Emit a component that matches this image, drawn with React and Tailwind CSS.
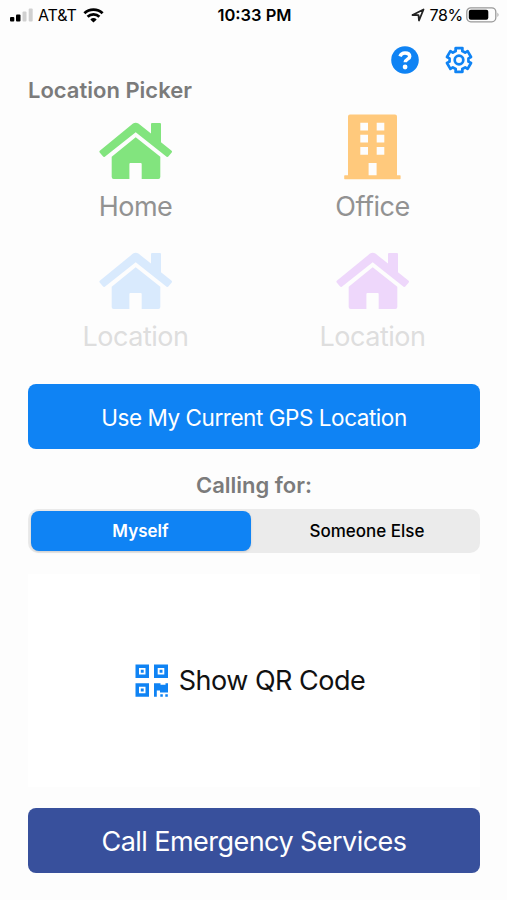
import { useState } from 'react';

function HouseIcon({ className }) {
  return (
    <svg viewBox="0 0 74 58" className={className} fill="currentColor">
      <path d="M34 1.6Q36.7-.2 39.4 1.6L52 11.4V2Q52 1 53 1H61Q62 1 62 2V20.3L72.6 28.8Q73.4 29.5 72.7 30.4L69.3 34.6Q68.5 35.4 67.6 34.7L36.7 10.3 5.8 34.7Q4.9 35.4 4.1 34.6L.7 30.4Q0 29.5.8 28.8Z" />
      <path d="M36.7 15.2 61.3 34.8V55Q61.3 57 59.3 57H42.7V42Q42.7 41 41.7 41H31.4Q30.4 41 30.4 42V57H14.7Q12.7 57 12.7 55V34.8Z" />
    </svg>
  );
}

function OfficeIcon({ className }) {
  return (
    <svg viewBox="0 0 57 66" className={className} fill="currentColor">
      <path
        fillRule="evenodd"
        d="M6 .5H51Q53 .5 53 2.5V61.3H56Q56.6 61.3 56.6 62V64.5Q56.6 65.3 56 65.3H.8Q.2 65.3.2 64.5V62Q.2 61.3.8 61.3H4V2.5Q4 .5 6 .5ZM16.3 8.8V16.6H24V8.8ZM32.7 8.8V16.6H40.3V8.8ZM16.3 20.8V28.6H24V20.8ZM32.7 20.8V28.6H40.3V20.8ZM16.3 33V40.8H24V33ZM32.7 33V40.8H40.3V33ZM24.6 49V61.3H32.6V49Z"
      />
    </svg>
  );
}

function QrIcon({ className }) {
  return (
    <svg viewBox="0 0 34 34" className={className} fill="currentColor">
      <path
        fillRule="evenodd"
        d="M.5 .5H14V14H.5ZM4 4V10.500H10.500V4ZM19 .5H33V14H19ZM22.700 4V10.500H29.300V4ZM.5 19.200H14V32.800H.5ZM4 22.700V29.300H10.500V22.700Z"
      />
      <path d="M5.800 5.800H8.700V8.700H5.800ZM24.600 5.800H27.500V8.700H24.600ZM5.800 24.600H8.700V27.500H5.800Z" />
      <path d="M19 19.200H25.500V20.800H30.500V19.200H33V28.500H25V26.500H21.800V32.800H19ZM25.300 30.300H27.800V32.800H25.300ZM30.300 30.300H32.800V32.800H30.300Z" />
    </svg>
  );
}

// Six teeth, one every 60 degrees, starting at the top
const gearPoints = [0, 60, 120, 180, 240, 300]
  .flatMap((a) => [[a - 20, 9.6], [a - 16, 12.400], [a + 16, 12.400], [a + 20, 9.6]])
  .map(([deg, r]) => {
    const t = (deg * Math.PI) / 180;
    return `${(14 + r * Math.sin(t)).toFixed(2)},${(14 - r * Math.cos(t)).toFixed(2)}`;
  })
  .join(' ');

function GearIcon({ className }) {
  return (
    <svg viewBox="0 0 28 28" className={className} fill="none" stroke="currentColor" strokeWidth="2.700" strokeLinejoin="round">
      <polygon points={gearPoints} />
      <circle cx="14" cy="14" r="4.300" />
    </svg>
  );
}

function StatusBar() {
  return (
    <header className="grid h-[30px] grid-cols-3 items-center pl-[9px] pr-[7px] text-black">
      <div className="flex items-center">
        <svg viewBox="0 0 24 15" className="h-[15px] w-6">
          <rect x="1" y="9" width="4.300" height="4.500" rx="1" />
          <rect x="7" y="6.500" width="4.500" height="7" rx="1" />
          <rect x="13.500" y="3.500" width="4" height="10" rx="1" fill="#d0d0d0" />
          <rect x="19.700" y="0.500" width="4" height="13" rx="1" fill="#d0d0d0" />
        </svg>
        <span className="ml-[5px] text-[16px] tracking-[-0.1px]">AT&amp;T</span>
        <svg viewBox="0 0 20 15" className="ml-[6px] h-[15px] w-[21px]" fill="none" stroke="#000" strokeWidth="2.800">
          <path d="M.9 5.300A13 13 0 0 1 19.100 5.300" />
          <path d="M4.100 8.700A8.500 8.500 0 0 1 15.900 8.700" />
          <path d="M6.800 11.400A4.700 4.700 0 0 1 13.200 11.400L10 14.600Z" fill="#000" stroke="none" />
        </svg>
      </div>
      <span className="pt-px text-center text-[16.500px] font-semibold">10:33 PM</span>
      <div className="flex items-center justify-end">
        <svg viewBox="0 0 14 14" className="h-[14px] w-[14px]" fill="none" stroke="#222" strokeWidth="1.800" strokeLinejoin="round">
          <path d="M1.500 7 12.500 1.500 8 12.500 7.500 7.200Z" />
        </svg>
        <span className="ml-1 text-[16px] tracking-[-0.3px]">78%</span>
        <svg viewBox="0 0 34 16" className="ml-[3px] h-4 w-[34px]">
          <rect x=".8" y=".8" width="29" height="14" rx="4" fill="none" stroke="#999" strokeWidth="1.300" />
          <rect x="2.800" y="2.800" width="19.500" height="10" rx="2" />
          <path d="M31.500 5.500Q33.500 7.800 31.500 10Z" fill="#999" />
        </svg>
      </div>
    </header>
  );
}

const locations = [
  { name: 'Home', Icon: HouseIcon, icon: 'h-[58px] w-[74px] text-[#82e47e]', text: 'text-[#929292]' },
  { name: 'Office', Icon: OfficeIcon, icon: 'h-[66px] w-[57px] text-[#ffc97c]', text: 'text-[#929292]' },
  { name: 'Location', Icon: HouseIcon, icon: 'h-[58px] w-[74px] text-[#d9eafd]', text: 'text-[#dedede]' },
  { name: 'Location', Icon: HouseIcon, icon: 'h-[58px] w-[74px] text-[#eed7fb]', text: 'text-[#dedede]' },
];

export default function App() {
  const [callingFor, setCallingFor] = useState('Myself');

  return (
    <div className="flex h-[900px] w-[507px] flex-col bg-[#fdfdfd] font-['Inter','Liberation_Sans',sans-serif]">
      <StatusBar />

      <main className="flex flex-col pl-7 pr-[27px]">
        <div className="flex h-[45px] items-start justify-end gap-[26px] pt-4 pr-[7px] text-[#0f83f4]">
          <button type="button" aria-label="Help">
            <svg viewBox="0 0 28 28" className="h-7 w-7">
              <circle cx="14" cy="14" r="13.800" fill="currentColor" />
              <path d="M9 10.300Q10.300 6.900 14 6.900 18.700 6.900 18.700 10.400C18.700 13.300 14.200 13 14.200 16.300" fill="none" stroke="#fff" strokeWidth="3.500" />
              <circle cx="14.100" cy="21" r="2.400" fill="#fff" />
            </svg>
          </button>
          <button type="button" aria-label="Settings">
            <GearIcon className="h-7 w-7" />
          </button>
        </div>
        <h1 className="flex h-[30px] items-center text-[22px] font-semibold text-[#7b7b7b]">Location Picker</h1>

        <div className="-mr-[22px] grid grid-cols-[215px_259px] grid-rows-[130px_130px] pt-[9px]">
          {locations.map(({ name, Icon, icon, text }, i) => (
            <button key={i} type="button" className={`flex flex-col items-center ${text}`}>
              <span className="flex h-[66px] items-end">
                <Icon className={icon} />
              </span>
              <span className="mt-[7px] text-[27px] leading-10 tracking-[-0.5px]">{name}</span>
            </button>
          ))}
        </div>

        <button type="button" className="mt-[10px] h-[65px] rounded-lg bg-[#0f83f4] pt-[3px] text-[22.500px] tracking-[-0.45px] text-white">
          Use My Current GPS Location
        </button>

        <h2 className="mt-5 text-center text-[22px] leading-8 font-semibold text-[#7b7b7b]">Calling for:</h2>

        <div className="mt-2 grid h-[44px] grid-cols-[220px_1fr] rounded-[10px] bg-[#ebebeb] px-[2.500px] py-[2px] text-[17px] font-medium">
          {['Myself', 'Someone Else'].map((option) => (
            <button
              key={option}
              type="button"
              onClick={() => setCallingFor(option)}
              className={`pt-[2px] last:pl-[6px] ${callingFor === option ? 'rounded-lg bg-[#0f83f4] font-semibold text-white shadow-sm' : 'text-black'}`}
            >
              {option}
            </button>
          ))}
        </div>

        <button type="button" className="mt-[21px] flex h-[213px] items-center justify-center gap-[10px] bg-white pr-[8px] text-[27px] tracking-[-0.5px] text-[#111]">
          <QrIcon className="h-[34px] w-[34px] text-[#0f83f4]" />
          <span className="pt-[2px]">Show QR Code</span>
        </button>

        <button type="button" className="mt-[21px] h-[65px] rounded-lg bg-[#38509c] pt-[3px] text-[27px] tracking-[-0.55px] text-white">
          Call Emergency Services
        </button>
      </main>
    </div>
  );
}
